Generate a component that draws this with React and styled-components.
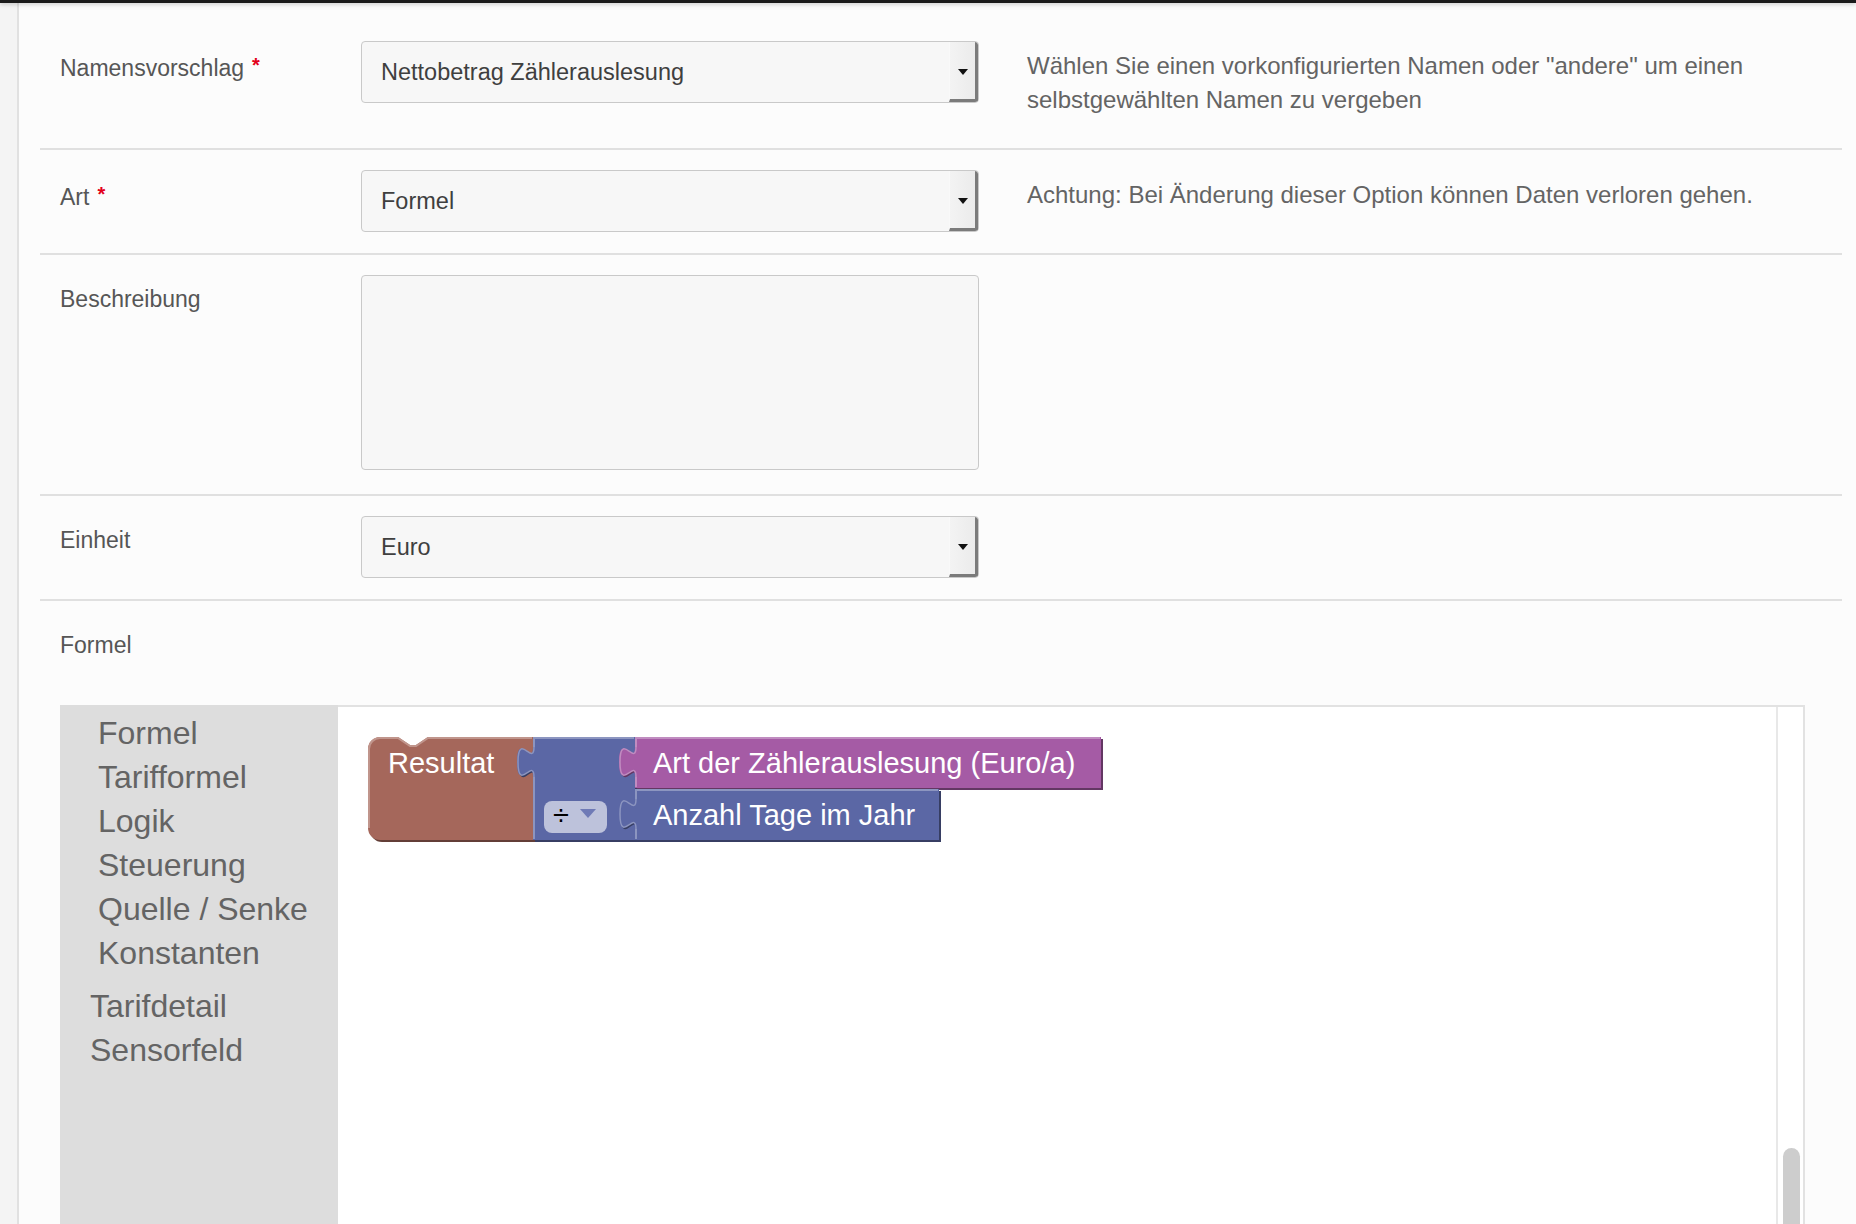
import React from "react"
import styled, { createGlobalStyle } from "styled-components"

const GlobalStyle = createGlobalStyle`
  html, body {
    margin: 0;
    padding: 0;
    background: #fcfcfc;
    overflow: hidden;
  }
  body {
    font-family: "Liberation Sans", Arial, sans-serif;
  }
`

const Shell = styled.div`
  display: flex;
  flex-direction: column;
  height: 100vh;
`

const TopBar = styled.div`
  height: 3px;
  background: #1b1b1b;
  box-shadow: 0 1px 4px rgba(0, 0, 0, 0.25);
  position: relative;
  z-index: 1;
`

const Body = styled.div`
  display: flex;
  flex: 1;
  min-height: 0;
`

const SideStrip = styled.div`
  width: 17px;
  background: #f4f4f4;
  border-right: 2px solid #e1e1e1;
`

const Content = styled.main`
  flex: 1;
  padding: 18px 14px 0 21px;
  background: #fcfcfc;
`

const FormRow = styled.div`
  display: grid;
  grid-template-columns: 253px 618px 1fr;
  column-gap: 48px;
  align-items: start;
  padding: 20px 20px 21px;
  border-bottom: 2px solid #e0e0e0;
`

const Label = styled.div`
  margin-top: 7px;
  font-size: 23px;
  line-height: 34px;
  color: #565656;
`

const Required = styled.span`
  margin-left: 8px;
  font-size: 20px;
  font-weight: bold;
  color: #e3001b;
  vertical-align: 4px;
`

const Help = styled.p`
  margin: 8px 0 10px;
  font-size: 24px;
  line-height: 34px;
  color: #646464;
`

const Select = styled.div`
  display: flex;
  align-items: center;
  height: 62px;
  box-sizing: border-box;
  padding-left: 19px;
  background: #f7f7f7;
  border: 1px solid #c9c9c9;
  border-radius: 4px;
  font-size: 23.5px;
  color: #3f3f3f;
  overflow: hidden;
`

const SelectValue = styled.span`
  flex: 1;
`

const SelectArrow = styled.span`
  align-self: stretch;
  width: 25px;
  display: flex;
  align-items: center;
  justify-content: center;
  background: linear-gradient(to right, #f3f3f3, #ebebeb);
  border-left: 1px solid #f9f9f9;
  border-right: 3px solid #7b7b7b;
  border-bottom: 3px solid #7b7b7b;
  border-top-right-radius: 3px;

  &::after {
    content: "";
    border-left: 5px solid transparent;
    border-right: 5px solid transparent;
    border-top: 6px solid #111;
    margin-top: 3px;
  }
`

const TextArea = styled.textarea`
  display: block;
  width: 618px;
  height: 195px;
  margin: 0 0 3px;
  box-sizing: border-box;
  background: #f7f7f7;
  border: 1px solid #c9c9c9;
  border-radius: 4px;
  resize: none;
  font-family: inherit;
`

const FormelSection = styled.section`
  padding: 20px 37px 0 20px;
`

const BlocklyFrame = styled.div`
  margin-top: 43px;
  height: 560px;
  display: flex;
`

const Toolbox = styled.div`
  width: 278px;
  padding-top: 6px;
  background: #dddddd;
  box-sizing: border-box;
`

const TreeItem = styled.div`
  padding-left: ${(p) => p.$indent}px;
  margin-top: ${(p) => (p.$gap ? 9 : 0)}px;
  font-size: 32px;
  line-height: 44px;
  color: #646464;
`

const Workspace = styled.div`
  position: relative;
  flex: 1;
  background: #fff;
  border-top: 2px solid #e2e2e2;
  border-right: 2px solid #e2e2e2;
`

const BlockCanvas = styled.svg`
  position: absolute;
  left: 0;
  top: 0;
  width: 1200px;
  height: 300px;
  font-family: "Liberation Sans", Arial, sans-serif;
`

const ScrollTrack = styled.div`
  position: absolute;
  top: 0;
  right: 0;
  bottom: 0;
  width: 25px;
  border-left: 2px solid #e8e8e8;
`

const ScrollThumb = styled.div`
  position: absolute;
  top: 441px;
  right: 3px;
  width: 17px;
  height: 160px;
  border-radius: 9px;
  background: #cdcdcd;
`

const colors = {
  result: { main: "#a5675b", light: "#c0958c", dark: "#633e37" },
  math: { main: "#5b67a5", light: "#8c95c0", dark: "#373e63" },
  field: { main: "#a55ba5", light: "#c08cc0", dark: "#633763" },
}

// puzzle tab on the left edge, drawn upward from y0+40 to y0+10
const tab = (x0, y0) => `M${x0},${y0 + 40} c0,-20 -16,16 -16,-15 s16,5 16,-15`

// block with an output tab on its left edge
const outPath = (x0, y0, x1, y1) =>
  `M${x0},${y0} H${x1} V${y1} H${x0} V${y0 + 40} c0,-20 -16,16 -16,-15 s16,5 16,-15 Z`

const OutBlock = ({ x0, y0, x1, y1, c }) => (
  <g>
    <path d={outPath(x0, y0, x1, y1)} fill={c.dark} transform="translate(2,2)" />
    <path d={outPath(x0, y0, x1, y1)} fill={c.main} />
    <path
      d={`M${x0 + 1},${y0 + 10} V${y0 + 1} H${x1 - 1}`}
      fill="none"
      stroke={c.light}
      strokeWidth="2"
    />
    <path d={tab(x0, y0)} fill="none" stroke={c.light} strokeWidth="1.5" transform="translate(1,0)" />
    <path d={`M${x0 + 1},${y0 + 40} V${y1 - 1}`} fill="none" stroke={c.light} strokeWidth="2" />
  </g>
)

const resultPath = "M30,42 A12,12 0 0 1 42,30 H60 l12,8 h6 l12,-8 H195 V133 H42 A12,12 0 0 1 30,121 Z"

const Blocks = () => (
  <BlockCanvas viewBox="0 0 1200 300">
    <path d={resultPath} fill={colors.result.dark} transform="translate(2,2)" />
    <path d={resultPath} fill={colors.result.main} />
    <path
      d="M31,121 V42 A11,11 0 0 1 42,31 H60 l12,8 h6 l12,-8 H194"
      fill="none"
      stroke={colors.result.light}
      strokeWidth="2"
    />
    <text x="50" y="66" fontSize="29" fill="#fff">
      Resultat
    </text>

    <OutBlock x0={195} y0={30} x1={297} y1={133} c={colors.math} />
    <rect x="206" y="94" width="63" height="32" rx="8" fill="#bdc2db" />
    <text x="215" y="118" fontSize="29" fill="#000">
      ÷
    </text>
    <polygon points="242,102 258,102 250,111" fill="#6f7ab6" />

    <OutBlock x0={297} y0={30} x1={763} y1={81} c={colors.field} />
    <text x="315" y="66" fontSize="29" fill="#fff">
      Art der Zählerauslesung (Euro/a)
    </text>

    <OutBlock x0={297} y0={82} x1={601} y1={133} c={colors.math} />
    <text x="315" y="118" fontSize="29" fill="#fff">
      Anzahl Tage im Jahr
    </text>
  </BlockCanvas>
)

const Dropdown = ({ value }) => (
  <Select>
    <SelectValue>{value}</SelectValue>
    <SelectArrow />
  </Select>
)

const toolboxItems = [
  { label: "Formel", indent: 38 },
  { label: "Tarifformel", indent: 38 },
  { label: "Logik", indent: 38 },
  { label: "Steuerung", indent: 38 },
  { label: "Quelle / Senke", indent: 38 },
  { label: "Konstanten", indent: 38 },
  { label: "Tarifdetail", indent: 30, gap: true },
  { label: "Sensorfeld", indent: 30 },
]

const App = () => {
  return (
    <Shell>
      <GlobalStyle />
      <TopBar />
      <Body>
        <SideStrip />
        <Content>
          <FormRow>
            <Label>
              Namensvorschlag<Required>*</Required>
            </Label>
            <Dropdown value="Nettobetrag Zählerauslesung" />
            <Help>
              Wählen Sie einen vorkonfigurierten Namen oder "andere" um einen selbstgewählten Namen
              zu vergeben
            </Help>
          </FormRow>

          <FormRow>
            <Label>
              Art<Required>*</Required>
            </Label>
            <Dropdown value="Formel" />
            <Help>Achtung: Bei Änderung dieser Option können Daten verloren gehen.</Help>
          </FormRow>

          <FormRow>
            <Label>Beschreibung</Label>
            <TextArea />
          </FormRow>

          <FormRow>
            <Label>Einheit</Label>
            <Dropdown value="Euro" />
          </FormRow>

          <FormelSection>
            <Label>Formel</Label>
            <BlocklyFrame>
              <Toolbox>
                {toolboxItems.map((item) => (
                  <TreeItem key={item.label} $indent={item.indent} $gap={item.gap}>
                    {item.label}
                  </TreeItem>
                ))}
              </Toolbox>
              <Workspace>
                <Blocks />
                <ScrollTrack>
                  <ScrollThumb />
                </ScrollTrack>
              </Workspace>
            </BlocklyFrame>
          </FormelSection>
        </Content>
      </Body>
    </Shell>
  )
}

export default App
